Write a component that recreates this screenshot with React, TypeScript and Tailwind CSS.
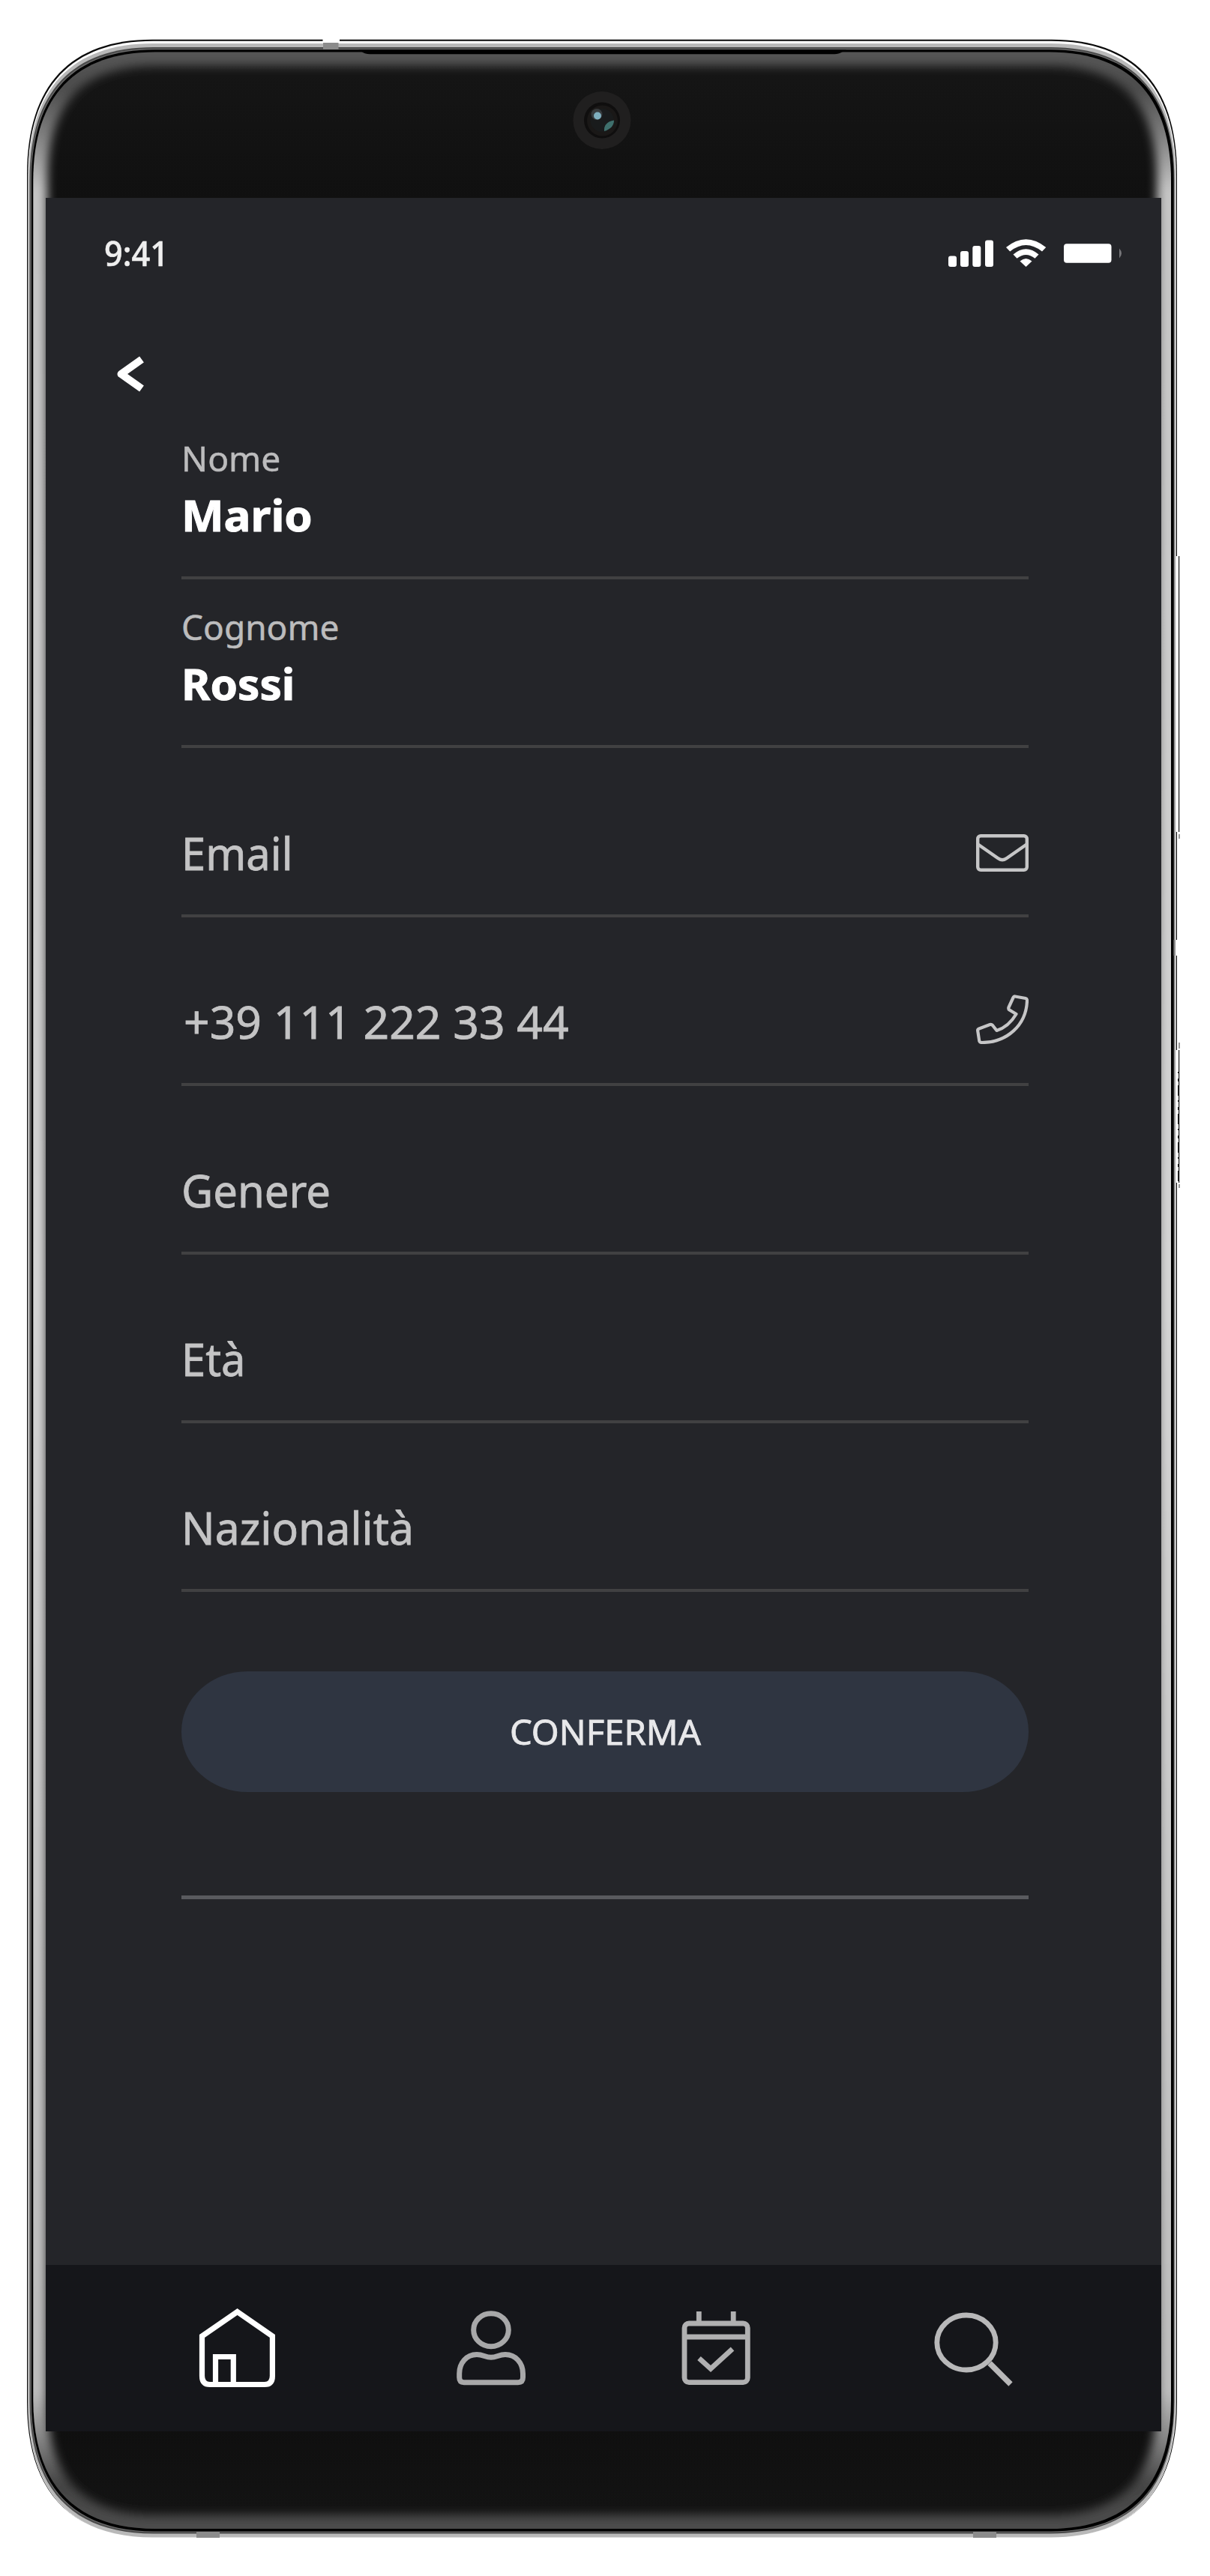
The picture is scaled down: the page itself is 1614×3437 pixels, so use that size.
import type { ReactNode } from 'react';

/* Rounded outline of the handset, with slightly squared corners. */
function outline(l: number, t: number, r: number, b: number, rx: number, ry: number) {
  const kx = rx * 0.65;
  const ky = ry * 0.665;
  return [
    `M${l} ${t + ry}`,
    `C${l} ${t + ry - ky} ${l + rx - kx} ${t} ${l + rx} ${t}`,
    `H${r - rx}`,
    `C${r - rx + kx} ${t} ${r} ${t + ry - ky} ${r} ${t + ry}`,
    `V${b - ry}`,
    `C${r} ${b - ry + ky} ${r - rx + kx} ${b} ${r - rx} ${b}`,
    `H${l + rx}`,
    `C${l + rx - kx} ${b} ${l} ${b - ry + ky} ${l} ${b - ry}Z`,
  ].join(' ');
}

const GLASS = outline(44.3, 69.5, 1562, 3374, 163, 172);

function Handset() {
  return (
    <svg className="absolute inset-0" width="1614" height="3437" viewBox="0 0 1614 3437" fill="none">
      <defs>
        <linearGradient id="rim" gradientUnits="userSpaceOnUse" x1="0" y1="69" x2="0" y2="3374">
          <stop offset="0" stopColor="#565656" />
          <stop offset="0.015" stopColor="#4c4c4c" />
          <stop offset="0.034" stopColor="#808080" />
          <stop offset="0.056" stopColor="#c4c4c4" />
          <stop offset="0.5" stopColor="#d4d4d4" />
          <stop offset="0.945" stopColor="#bcbcbc" />
          <stop offset="0.965" stopColor="#808080" />
          <stop offset="0.982" stopColor="#444444" />
          <stop offset="1" stopColor="#4c4c4c" />
        </linearGradient>
        <linearGradient id="face" x1="0" y1="0" x2="0" y2="1">
          <stop offset="0" stopColor="#161616" />
          <stop offset="0.06" stopColor="#101010" />
          <stop offset="0.95" stopColor="#0e0e0e" />
          <stop offset="1" stopColor="#141414" />
        </linearGradient>
        <filter id="soft" filterUnits="userSpaceOnUse" x="0" y="0" width="1614" height="3437">
          <feGaussianBlur stdDeviation="6.500" />
        </filter>
        <clipPath id="glass">
          <path d={GLASS} />
        </clipPath>
      </defs>

      <path d={outline(36, 52.7, 1570, 3385, 167, 180)} fill="#0a0a0a" />
      <path d={outline(37.3, 54.7, 1568.8, 3386, 167, 180)} fill="#ffffff" />
      <path d={outline(38, 58, 1568, 3385.5, 166, 178)} fill="#b9b9b9" />
      <path d={outline(39.6, 63, 1566.4, 3380.5, 165, 176)} fill="#4a4a4a" />
      <path d={outline(41, 65, 1565.8, 3378.5, 164, 175)} fill="#6b6b6b" />
      <path d={outline(42, 66.3, 1565.6, 3377.5, 164, 174)} fill="#000000" />
      <path d={GLASS} fill="url(#face)" />
      <g clipPath="url(#glass)">
        <path d={GLASS} stroke="url(#rim)" strokeWidth="37" filter="url(#soft)" />
      </g>

      {/* antenna breaks */}
      <rect x="430.5" y="52" width="22.5" height="5" fill="#ffffff" />
      <rect x="431" y="57" width="20.5" height="9" fill="#8b8b8b" />
      <rect x="262" y="3378" width="31" height="8" fill="#8b8b8b" />
      <rect x="1298" y="3378" width="31" height="8" fill="#8b8b8b" />
      <rect x="1566" y="1254" width="5" height="21" fill="#ffffff" />
      <rect x="1565.6" y="1254" width="2.4" height="21" fill="#8b8b8b" />

      {/* earpiece */}
      <path d="M478 66.5H1129L1120 71Q1117 72.3 1110 72.3H497Q489 72.3 486 71Z" fill="#000000" />

      {/* side keys */}
      <rect x="1568.6" y="742" width="3.4" height="368" fill="#ffffff" />
      <rect x="1572" y="742" width="1.2" height="368" fill="#111111" />
      <rect x="1572" y="1113" width="2" height="6" fill="#9a9a9a" />
      <rect x="1572" y="1391" width="2" height="8" fill="#9a9a9a" />
      <rect x="1568.6" y="1401" width="3.4" height="177" fill="#ffffff" />
      <rect x="1572" y="1401" width="1.2" height="177" fill="#111111" />
      <path d="M1571.5 1430V1576" stroke="#222222" strokeWidth="1" strokeDasharray="2 7 4 5 14 6" />
      <rect x="1572" y="1580" width="2" height="5" fill="#9a9a9a" />

      {/* front camera */}
      <circle cx="803" cy="160.5" r="38.5" fill="#201f1f" />
      <circle cx="803" cy="160.5" r="24" fill="#0f0e0e" />
      <circle cx="803.5" cy="161" r="20.5" fill="#1a1817" />
      <circle cx="803" cy="160.5" r="15.5" fill="#191b1c" />
      <circle cx="796" cy="152.500" r="7.500" fill="#4b5155" fillOpacity="0.6" />
      <circle cx="797" cy="154.500" r="5" fill="#7fafbf" />
      <path d="M806 175Q805 163 819 160.500Q819 171 806 175Z" fill="#3f706d" />
    </svg>
  );
}

function StatusBar() {
  return (
    <header className="flex h-[148px] items-center justify-between pl-[78px] pr-[53px]">
      <span className="mb-[3px] origin-left scale-x-[0.94] text-[46px] leading-[46px] font-medium text-[#efefef] [-webkit-text-stroke:0.6px]">
        9:41
      </span>
      <svg width="232" height="40" viewBox="1265 318 232 40" fill="#ffffff">
        <rect x="1266" y="341.500" width="11" height="14.500" rx="3" />
        <rect x="1282" y="335" width="11" height="21" rx="3" />
        <rect x="1298.300" y="328" width="11" height="28" rx="3" />
        <rect x="1315" y="320.500" width="11" height="35.500" rx="3" />
        <path d="M1343 330Q1369.500 308.500 1396.200 330L1391 335.500Q1369.500 318.500 1348.200 335.500Z" />
        <path d="M1352.500 339.500Q1369.500 325 1386.500 339.500L1381.500 344.800Q1369.500 335 1357.500 344.800Z" />
        <path d="M1361.500 348.500Q1369.500 341.500 1377.500 348.500L1369.500 356Z" />
        <rect x="1420" y="325.300" width="63.500" height="25.500" rx="4" />
        <path d="M1494 331.500Q1500 338 1494 344.500Z" fill="#77777a" />
      </svg>
    </header>
  );
}

function Field({ children, icon }: { children: ReactNode; icon?: ReactNode }) {
  return (
    <div className="flex h-[225.200px] items-end justify-between border-b-4 border-[#414142] pb-[52px]">
      <div className="flex flex-col gap-[23px]">{children}</div>
      {icon}
    </div>
  );
}

const LABEL = 'origin-left text-[46px] leading-[46px] text-[#bcbcbd] [-webkit-text-stroke:0.5px]';
const VALUE = 'origin-left text-[58px] leading-[60px] font-bold text-white [-webkit-text-stroke:1px]';
const HINT = 'origin-left text-[60px] leading-[60px] text-[#c4c4c5] [-webkit-text-stroke:0.8px]';

function MailIcon() {
  return (
    <svg className="mb-[5px]" width="70" height="50" viewBox="0 0 70 50" fill="none" stroke="#c6c6c7" strokeWidth="4.400">
      <rect x="2.200" y="2.200" width="65.600" height="45.600" rx="4" />
      <path d="M2.500 13.500L29 32Q35 36.500 41 32L67.500 13.500" />
    </svg>
  );
}

function PhoneIcon() {
  return (
    <svg width="70" height="66" viewBox="0 0 70 66" fill="none" stroke="#c6c6c7" strokeWidth="4.200" strokeLinejoin="round">
      <path d="M52 2.500L66 5Q68 5.500 68 8C67 41 41 64 7.500 64Q5 64 4.300 62L2.200 48.500Q1.800 46.300 4 45.500L18.500 40Q20.500 39.300 22 41L27.500 48C37 45 47 37 53.500 26L44.500 20.500Q42.700 19.200 43.500 17L49.500 4Q50.300 2.200 52 2.500Z" />
    </svg>
  );
}

function TabBar() {
  return (
    <nav className="flex h-[222px] items-start bg-[#15161a] pt-[56px] pl-[202px]">
      <svg width="108" height="110" viewBox="263 3078 108 110" fill="none" stroke="#ffffff" strokeWidth="7.200">
        <path d="M316.600 3084.500L363.400 3117V3170Q363.400 3181.500 353 3181.500H280Q269.500 3181.500 269.500 3170V3117Z" />
        <path d="M287.500 3183V3144.500H311.300V3183" />
      </svg>
      <svg className="ml-[236px]" width="96" height="110" viewBox="607 3078 96 110" fill="none" stroke="#a8a8a9" strokeWidth="7">
        <ellipse cx="655" cy="3108.700" rx="23.300" ry="22" />
        <path d="M636 3141.500C645 3141.500 647 3145.300 655 3145.300S665 3141.500 674 3141.500C688 3141.500 697.500 3153 697.500 3167V3172Q697.500 3178.700 691 3178.700H619Q612.700 3178.700 612.700 3172V3167C612.700 3153 622 3141.500 636 3141.500Z" />
      </svg>
      <svg className="ml-[204px]" width="96" height="110" viewBox="907 3078 96 110" fill="none" stroke="#b0b0b1" strokeWidth="6.800">
        <rect x="913" y="3100" width="84.300" height="78.600" rx="6" />
        <path d="M932.300 3084V3099M978.200 3084V3099M914 3118H997M932.500 3146.500L948 3160.500L977 3134" />
      </svg>
      <svg className="ml-[239px]" width="110" height="110" viewBox="1242 3078 110 110" fill="none" stroke="#b8b8b9" strokeWidth="6.800">
        <ellipse cx="1289" cy="3125.500" rx="39.200" ry="36.500" />
        <path d="M1320 3153L1348 3181" strokeWidth="7.500" />
      </svg>
    </nav>
  );
}

export default function App() {
  return (
    <div className="relative h-[3437px] w-[1614px] overflow-hidden bg-white font-['Noto_Sans','Open_Sans',sans-serif]">
      <Handset />
      <div className="relative pt-[264px] pl-[61px]">
        <main className="flex h-[2980px] w-[1488px] flex-col bg-[#242529]">
          <StatusBar />
          <div className="flex h-[136px] items-start pt-[63px] pl-[92px]">
            <svg width="40" height="48" viewBox="0 0 40 48" fill="none" stroke="#ffffff" strokeWidth="10" strokeLinejoin="round">
              <path d="M36 4.500L8.500 24L36 43.500" />
            </svg>
          </div>
          <section className="mx-[181px] w-[1130px]">
            <Field>
              <span className={`${LABEL} scale-x-[1.005]`}>Nome</span>
              <span className={`${VALUE} scale-x-[1.035]`}>Mario</span>
            </Field>
            <Field>
              <span className={`${LABEL} scale-x-100`}>Cognome</span>
              <span className={`${VALUE} scale-x-[1.01]`}>Rossi</span>
            </Field>
            <Field icon={<MailIcon />}>
              <span className={`${HINT} scale-x-[0.965]`}>Email</span>
            </Field>
            <Field icon={<PhoneIcon />}>
              <span className={`${HINT} ml-[3px] scale-x-[1.01]`}>+39 111 222 33 44</span>
            </Field>
            <Field>
              <span className={`${HINT} scale-x-[0.967]`}>Genere</span>
            </Field>
            <Field>
              <span className={`${HINT} scale-x-[0.965]`}>Età</span>
            </Field>
            <Field>
              <span className={`${HINT} scale-x-[0.98]`}>Nazionalità</span>
            </Field>
            <button className="mt-[106px] flex h-[161px] w-full items-center justify-center rounded-[88px/80px] bg-[#2f3541]">
              <span className="scale-x-[1.05] text-[45px] leading-[46px] text-[#e8e8ea] [-webkit-text-stroke:0.8px]">CONFERMA</span>
            </button>
            <div className="mt-[138px] h-[5px] bg-[#595a5e]" />
          </section>
          <div className="mt-auto">
            <TabBar />
          </div>
        </main>
      </div>
    </div>
  );
}
